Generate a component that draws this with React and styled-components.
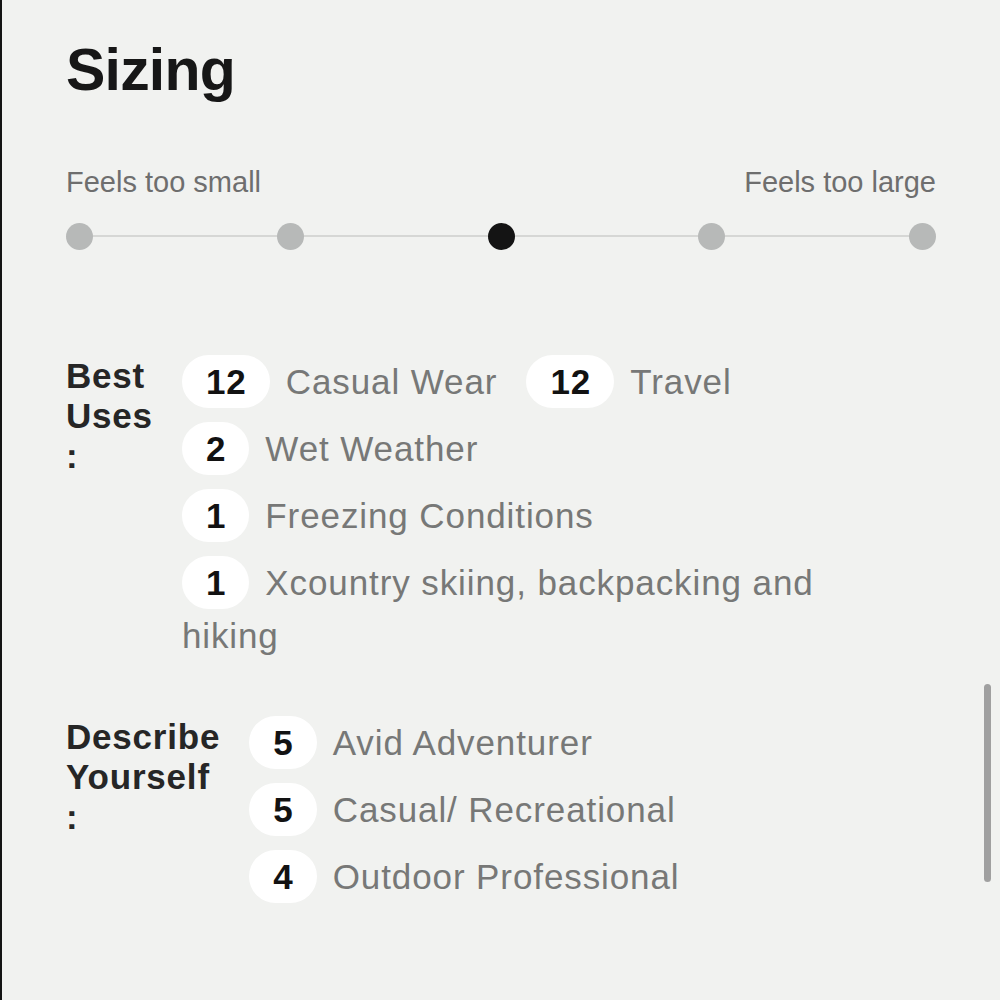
import styled, { createGlobalStyle } from "styled-components"

const GlobalStyle = createGlobalStyle`
  html, body {
    margin: 0;
    padding: 0;
    background: #f1f2f0;
  }
  body {
    font-family: "Liberation Sans", Arial, sans-serif;
  }
`

const Page = styled.div`
  position: relative;
  box-sizing: border-box;
  width: 1000px;
  height: 1000px;
  overflow: hidden;
  border-left: 2px solid #141414;
  background: #f1f2f0;
  padding: 30px 64px 0 64px;
`

const Title = styled.h2`
  margin: 0;
  font-size: 59px;
  font-weight: 700;
  line-height: 80px;
  color: #171717;
  letter-spacing: -0.8px;
`

const ScaleLabels = styled.div`
  display: flex;
  justify-content: space-between;
  margin-top: 52px;
  font-size: 29px;
  line-height: 40px;
  color: #6e6e6e;
`

const Track = styled.div`
  position: relative;
  display: flex;
  justify-content: space-between;
  align-items: center;
  margin-top: 20px;
  height: 28px;

  &:before {
    content: "";
    position: absolute;
    left: 14px;
    right: 14px;
    top: 13px;
    height: 2px;
    background: #d6d7d5;
  }
`

const Dot = styled.span`
  position: relative;
  width: 27px;
  height: 27px;
  border-radius: 50%;
  background: ${(props) => (props.active ? "#141414" : "#b7b9b8")};
`

const Group = styled.div`
  display: flex;
  gap: 29px;
  margin-top: ${(props) => props.top}px;
`

const Label = styled.div`
  width: min-content;
  flex: none;
  padding-top: 1px;
  font-size: 35px;
  font-weight: 700;
  line-height: 40px;
  letter-spacing: 0.8px;
  color: #262626;
`

const Items = styled.div`
  flex: 1;
  display: flex;
  flex-wrap: wrap;
  column-gap: 29px;
  row-gap: 14px;
  align-content: flex-start;
  padding-right: 30px;
`

const Item = styled.div`
  font-size: 35px;
  line-height: 53px;
  color: #777877;
  letter-spacing: 0.9px;
`

const Count = styled.span`
  display: inline-block;
  min-width: 19px;
  padding: 0 23px 0 24px;
  margin-right: 16px;
  height: 53px;
  border-radius: 27px;
  background: #ffffff;
  text-align: center;
  font-size: 35px;
  font-weight: 700;
  letter-spacing: 1px;
  color: #121212;
  vertical-align: top;
`

const Scrollbar = styled.div`
  position: absolute;
  right: 9px;
  top: 684px;
  width: 7px;
  height: 198px;
  border-radius: 4px;
  background: #a0a0a0;
`

const bestUses = [
  { count: 12, name: "Casual Wear" },
  { count: 12, name: "Travel" },
  { count: 2, name: "Wet Weather" },
  { count: 1, name: "Freezing Conditions" },
  { count: 1, name: "Xcountry skiing, backpacking and hiking" },
]

const describe = [
  { count: 5, name: "Avid Adventurer" },
  { count: 5, name: "Casual/ Recreational" },
  { count: 4, name: "Outdoor Professional" },
]

const TagGroup = ({ label, items, top }) => (
  <Group top={top}>
    <Label>{label}</Label>
    <Items>
      {items.map((item) => (
        <Item key={item.name}>
          <Count>{item.count}</Count>
          {item.name}
        </Item>
      ))}
    </Items>
  </Group>
)

const App = () => {
  const steps = [0, 1, 2, 3, 4]
  return (
    <>
      <GlobalStyle />
      <Page>
        <Title>Sizing</Title>
        <ScaleLabels>
          <span>Feels too small</span>
          <span>Feels too large</span>
        </ScaleLabels>
        <Track>
          {steps.map((s) => (
            <Dot key={s} active={s === 2} />
          ))}
        </Track>
        <TagGroup label="Best Uses :" items={bestUses} top={105} />
        <TagGroup label="Describe Yourself :" items={describe} top={54} />
        <Scrollbar />
      </Page>
    </>
  )
}

export default App
